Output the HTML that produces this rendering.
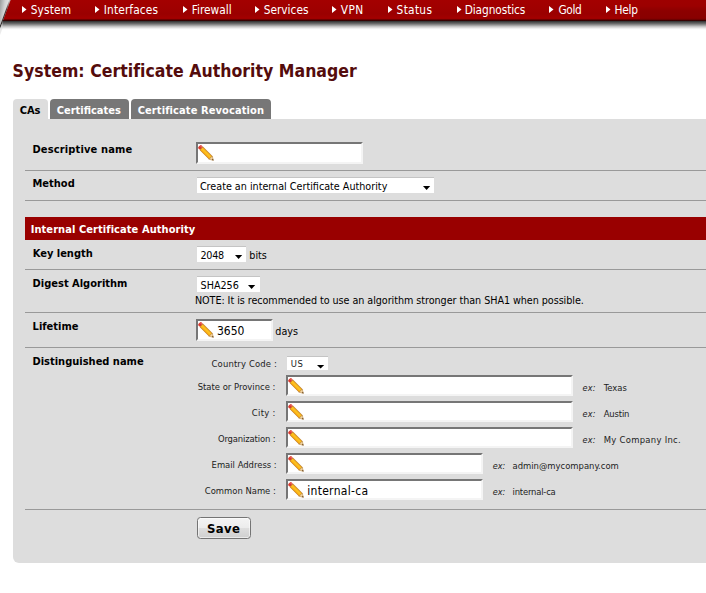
<!DOCTYPE html>
<html lang="en">
<head>
<meta charset="utf-8">
<title>System: Certificate Authority Manager</title>
<style>
html,body{margin:0;padding:0;background:#fff;}
body{width:706px;height:593px;position:relative;overflow:hidden;font-family:"DejaVu Sans Condensed","Liberation Sans",sans-serif;font-size:11px;color:#000;}
.t{position:absolute;white-space:nowrap;line-height:1.2;display:block;}
.a{position:absolute;display:block;}
#nav{left:0;top:0;width:706px;height:21px;background:linear-gradient(#9e0000 0,#9c0000 6px,#8c0000 11px,#890000 18px,#7a0000 19.3px,#3c0000 20.3px,#2a0505 21px);}
#nav2{left:0;top:0;width:640px;height:19.4px;background:linear-gradient(#a40000 0,#a00000 8px,#9a0000 14px,#a30000 18px,#980000 19.4px);}
#navshadow{left:0;top:21px;width:706px;height:9px;background:linear-gradient(#2c2c2c 0,#464646 1px,#686868 2.5px,#959595 4px,#c4c4c4 5.5px,#e6e6e6 7px,#f8f8f8 8px,#fff 9px);}
.tab{position:absolute;top:99px;height:20px;border-radius:4px 4px 0 0;}
.tab.on{background:#dddddd;}
.tab.off{background:#777777;}
#panel{left:13px;top:119px;width:693px;height:444px;background:#dddddd;border-radius:0 0 0 6px;}
.hr{position:absolute;left:25px;width:681px;height:1px;background:#999;}
.inp{position:absolute;background:#fff;border-style:solid;border-width:2px;border-color:#767676 #f4f4f4 #f4f4f4 #767676;box-sizing:border-box;}
.sel{position:absolute;background:#fff;box-sizing:border-box;border-top:1px solid #c4c4c4;}
#bar{left:25px;top:217px;width:681px;height:23px;background:#990000;}
#save{left:197px;top:517px;width:54px;height:22px;box-sizing:border-box;border:1px solid #747474;border-radius:3.5px;box-shadow:inset 0 0 0 1px rgba(255,255,255,.55);background:linear-gradient(#f4f4f4 0,#ececec 48%,#dedede 52%,#cfcfcf 100%);}
.pen{position:absolute;width:17px;height:17px;overflow:visible;}
</style>
</head>
<body>
<div class="a" id="nav"></div>
<div class="a" id="nav2"></div>
<div class="a" id="navshadow"></div>
<svg class="a" style="left:0;top:0" width="16" height="40" viewBox="0 0 16 40">
  <defs>
    <linearGradient id="g1" x1="0" y1="0" x2="1" y2="0.36"><stop offset="0" stop-color="#9a9c9c"/><stop offset="0.45" stop-color="#d2d3d3"/><stop offset="0.8" stop-color="#e6e6e6"/><stop offset="1" stop-color="#c8c8c8"/></linearGradient>
    <linearGradient id="g2" x1="0" y1="0" x2="0" y2="1"><stop offset="0" stop-color="#3a0a0a" stop-opacity="0.15"/><stop offset="0.35" stop-color="#2a0808" stop-opacity="0.8"/><stop offset="1" stop-color="#111" stop-opacity="1"/></linearGradient>
  </defs>
  <polygon points="0,0 10.6,0 0,28.5" fill="url(#g1)"/>
  <polygon points="10.6,0 9.2,0 0,26 0,28.5" fill="url(#g2)"/>
  <polygon points="0,28.5 2.6,22 2.6,28 0,35" fill="#d9d9d9" opacity="0.55"/>
</svg>
<svg class="a" style="left:21.7px;top:5.9px" width="5" height="7" viewBox="0 0 5 7"><polygon points="0,0 4.5,3.5 0,7" fill="#fff"/></svg>
<svg class="a" style="left:95.0px;top:5.9px" width="5" height="7" viewBox="0 0 5 7"><polygon points="0,0 4.5,3.5 0,7" fill="#fff"/></svg>
<svg class="a" style="left:182.8px;top:5.9px" width="5" height="7" viewBox="0 0 5 7"><polygon points="0,0 4.5,3.5 0,7" fill="#fff"/></svg>
<svg class="a" style="left:255.0px;top:5.9px" width="5" height="7" viewBox="0 0 5 7"><polygon points="0,0 4.5,3.5 0,7" fill="#fff"/></svg>
<svg class="a" style="left:332.0px;top:5.9px" width="5" height="7" viewBox="0 0 5 7"><polygon points="0,0 4.5,3.5 0,7" fill="#fff"/></svg>
<svg class="a" style="left:388.4px;top:5.9px" width="5" height="7" viewBox="0 0 5 7"><polygon points="0,0 4.5,3.5 0,7" fill="#fff"/></svg>
<svg class="a" style="left:456.5px;top:5.9px" width="5" height="7" viewBox="0 0 5 7"><polygon points="0,0 4.5,3.5 0,7" fill="#fff"/></svg>
<svg class="a" style="left:548.9px;top:5.9px" width="5" height="7" viewBox="0 0 5 7"><polygon points="0,0 4.5,3.5 0,7" fill="#fff"/></svg>
<svg class="a" style="left:606.3px;top:5.9px" width="5" height="7" viewBox="0 0 5 7"><polygon points="0,0 4.5,3.5 0,7" fill="#fff"/></svg>

<div class="tab on" style="left:13px;width:35px"></div>
<div class="tab off" style="left:50.2px;width:78.4px"></div>
<div class="tab off" style="left:130.7px;width:140.3px"></div>
<div class="a" id="panel"></div>

<div class="inp" style="left:196px;top:142px;width:167px;height:22px"></div>
<div class="hr" style="top:170px"></div>
<div class="sel" style="left:197px;top:177px;width:237px;height:16px"></div>
<div class="hr" style="top:200px"></div>
<div class="a" id="bar"></div>
<div class="sel" style="left:197px;top:246px;width:49px;height:16px"></div>
<div class="hr" style="top:269px"></div>
<div class="sel" style="left:197px;top:276px;width:63px;height:16px"></div>
<div class="hr" style="top:312px"></div>
<div class="inp" style="left:196px;top:319px;width:77px;height:22px"></div>
<div class="hr" style="top:347px"></div>
<div class="sel" style="left:287px;top:356px;width:41px;height:14px"></div>
<div class="inp" style="left:286px;top:375px;width:287px;height:21px"></div>
<div class="inp" style="left:286px;top:401px;width:287px;height:21px"></div>
<div class="inp" style="left:286px;top:427px;width:287px;height:21px"></div>
<div class="inp" style="left:286px;top:453px;width:197px;height:21px"></div>
<div class="inp" style="left:286px;top:479px;width:197px;height:21px"></div>
<div class="hr" style="top:509px"></div>
<div class="a" id="save"></div>

<svg class="a" style="left:423px;top:186px" width="8" height="5" viewBox="0 0 8 5"><polygon points="0,0 7.2,0 3.6,4.1" fill="#000"/></svg>
<svg class="a" style="left:235px;top:255px" width="8" height="5" viewBox="0 0 8 5"><polygon points="0,0 7.2,0 3.6,4.1" fill="#000"/></svg>
<svg class="a" style="left:248.4px;top:285px" width="8" height="5" viewBox="0 0 8 5"><polygon points="0,0 7.2,0 3.6,4.1" fill="#000"/></svg>
<svg class="a" style="left:317px;top:365.2px" width="8" height="5" viewBox="0 0 8 5"><polygon points="0,0 7.2,0 3.6,3.6" fill="#000"/></svg>
<svg width="0" height="0" style="position:absolute"><defs>
<g id="pencil">
  <g transform="translate(1.9,1.9) rotate(45)">
    <rect x="-1" y="-2.2" width="3.6" height="4.4" rx="1.3" fill="#dc3a30"/>
    <rect x="-0.6" y="-2" width="2.8" height="1.4" rx="0.7" fill="#ee7a70" opacity="0.7"/>
    <rect x="2.2" y="-2.2" width="13.1" height="4.4" fill="url(#pg)" stroke="#b97a22" stroke-width="0.6"/>
    <polygon points="15.3,-2.2 19,0 15.3,2.2" fill="#f3d5a2" stroke="#b07a30" stroke-width="0.5"/>
    <polygon points="17.7,-0.8 19.4,0 17.7,0.8" fill="#5a3a1a"/>
  </g>
</g>
<linearGradient id="pg" x1="0" y1="0" x2="0" y2="1"><stop offset="0" stop-color="#dd8f1c"/><stop offset="0.4" stop-color="#ffc722"/><stop offset="0.65" stop-color="#fbb818"/><stop offset="1" stop-color="#ef9410"/></linearGradient></defs></svg>
<svg class="pen" style="left:198px;top:145px" viewBox="0 0 17 17"><use href="#pencil"/></svg>
<svg class="pen" style="left:198px;top:322px" viewBox="0 0 17 17"><use href="#pencil"/></svg>
<svg class="pen" style="left:288px;top:378px" viewBox="0 0 17 17"><use href="#pencil"/></svg>
<svg class="pen" style="left:288px;top:404px" viewBox="0 0 17 17"><use href="#pencil"/></svg>
<svg class="pen" style="left:288px;top:430px" viewBox="0 0 17 17"><use href="#pencil"/></svg>
<svg class="pen" style="left:288px;top:456px" viewBox="0 0 17 17"><use href="#pencil"/></svg>
<svg class="pen" style="left:288px;top:482px" viewBox="0 0 17 17"><use href="#pencil"/></svg>
<span class="t" id="t0" style="left:30.70px;top:3.01px;font-size:11.8px;letter-spacing:0.144px;color:#fff;">System</span>
<span class="t" id="t1" style="left:103.80px;top:3.01px;font-size:11.8px;letter-spacing:0.133px;color:#fff;">Interfaces</span>
<span class="t" id="t2" style="left:191.70px;top:3.01px;font-size:11.8px;letter-spacing:0.000px;color:#fff;">Firewall</span>
<span class="t" id="t3" style="left:263.70px;top:3.01px;font-size:11.8px;letter-spacing:0.000px;color:#fff;">Services</span>
<span class="t" id="t4" style="left:340.80px;top:3.01px;font-size:11.8px;letter-spacing:0.360px;color:#fff;">VPN</span>
<span class="t" id="t5" style="left:396.60px;top:3.01px;font-size:11.8px;letter-spacing:0.304px;color:#fff;">Status</span>
<span class="t" id="t6" style="left:464.70px;top:3.01px;font-size:11.8px;letter-spacing:-0.096px;color:#fff;">Diagnostics</span>
<span class="t" id="t7" style="left:558.38px;top:3.01px;font-size:11.8px;letter-spacing:-0.347px;color:#fff;">Gold</span>
<span class="t" id="t8" style="left:614.50px;top:3.01px;font-size:11.8px;letter-spacing:-0.267px;color:#fff;">Help</span>
<span class="t" id="t9" style="left:12.60px;top:61.01px;font-size:17.5px;letter-spacing:0.022px;font-weight:bold;color:#540c0c;">System: Certificate Authority Manager</span>
<span class="t" id="t10" style="left:19.70px;top:104.01px;font-size:11px;letter-spacing:0.000px;font-weight:bold;">CAs</span>
<span class="t" id="t11" style="left:56.70px;top:104.01px;font-size:11px;letter-spacing:0.000px;font-weight:bold;color:#fff;">Certificates</span>
<span class="t" id="t12" style="left:137.70px;top:104.01px;font-size:11px;letter-spacing:0.103px;font-weight:bold;color:#fff;">Certificate Revocation</span>
<span class="t" id="t13" style="left:32.50px;top:143.01px;font-size:11px;letter-spacing:0.149px;font-weight:bold;">Descriptive name</span>
<span class="t" id="t14" style="left:32.50px;top:177.01px;font-size:11px;letter-spacing:0.000px;font-weight:bold;">Method</span>
<span class="t" id="t15" style="left:30.70px;top:223.01px;font-size:11px;letter-spacing:0.072px;font-weight:bold;color:#fff;">Internal Certificate Authority</span>
<span class="t" id="t16" style="left:32.70px;top:247.00px;font-size:11px;letter-spacing:0.000px;font-weight:bold;">Key length</span>
<span class="t" id="t17" style="left:32.60px;top:277.00px;font-size:11px;letter-spacing:0.000px;font-weight:bold;">Digest Algorithm</span>
<span class="t" id="t18" style="left:32.60px;top:320.01px;font-size:11px;letter-spacing:0.000px;font-weight:bold;">Lifetime</span>
<span class="t" id="t19" style="left:32.50px;top:355.00px;font-size:11px;letter-spacing:0.000px;font-weight:bold;">Distinguished name</span>
<span class="t" id="t20" style="left:199.90px;top:181.01px;font-size:10.7px;letter-spacing:0.000px;">Create an internal Certificate Authority</span>
<span class="t" id="t21" style="left:200.50px;top:250.01px;font-size:10.7px;letter-spacing:-0.267px;">2048</span>
<span class="t" id="t22" style="left:249.30px;top:250.01px;font-size:10.7px;letter-spacing:0.000px;">bits</span>
<span class="t" id="t23" style="left:200.56px;top:280.01px;font-size:10.7px;letter-spacing:0.000px;">SHA256</span>
<span class="t" id="t24" style="left:194.90px;top:295.01px;font-size:10.7px;letter-spacing:-0.044px;">NOTE: It is recommended to use an algorithm stronger than SHA1 when possible.</span>
<span class="t" id="t25" style="left:216.90px;top:324.00px;font-size:12px;letter-spacing:0.000px;">3650</span>
<span class="t" id="t26" style="left:275.30px;top:326.00px;font-size:10.7px;letter-spacing:0.000px;">days</span>
<span class="t" id="t27" style="left:211.56px;top:358.01px;font-size:9.4px;letter-spacing:0.148px;color:#1c1c1c;">Country Code :</span>
<span class="t" id="t28" style="left:290.80px;top:358.01px;font-size:9.4px;letter-spacing:0.600px;color:#1c1c1c;">US</span>
<span class="t" id="t29" style="left:197.70px;top:381.01px;font-size:9.4px;letter-spacing:0.000px;color:#1c1c1c;">State or Province :</span>
<span class="t" id="t30" style="left:251.80px;top:407.01px;font-size:9.4px;letter-spacing:0.320px;color:#1c1c1c;">City :</span>
<span class="t" id="t31" style="left:217.90px;top:433.01px;font-size:9.4px;letter-spacing:-0.129px;color:#1c1c1c;">Organization :</span>
<span class="t" id="t32" style="left:211.56px;top:459.00px;font-size:9.4px;letter-spacing:0.000px;color:#1c1c1c;">Email Address :</span>
<span class="t" id="t33" style="left:204.74px;top:485.00px;font-size:9.4px;letter-spacing:0.000px;color:#1c1c1c;">Common Name :</span>
<span class="t" id="t34" style="left:582.38px;top:383.00px;font-size:9px;letter-spacing:0.320px;color:#1c1c1c;font-style:italic;">ex:</span>
<span class="t" id="t35" style="left:582.38px;top:409.00px;font-size:9px;letter-spacing:0.320px;color:#1c1c1c;font-style:italic;">ex:</span>
<span class="t" id="t36" style="left:582.38px;top:435.00px;font-size:9px;letter-spacing:0.320px;color:#1c1c1c;font-style:italic;">ex:</span>
<span class="t" id="t37" style="left:492.74px;top:461.01px;font-size:9px;letter-spacing:0.000px;color:#1c1c1c;font-style:italic;">ex:</span>
<span class="t" id="t38" style="left:492.74px;top:487.00px;font-size:9px;letter-spacing:0.000px;color:#1c1c1c;font-style:italic;">ex:</span>
<span class="t" id="t39" style="left:603.74px;top:382.01px;font-size:9.4px;letter-spacing:0.000px;color:#1c1c1c;">Texas</span>
<span class="t" id="t40" style="left:603.74px;top:408.01px;font-size:9.4px;letter-spacing:-0.160px;color:#1c1c1c;">Austin</span>
<span class="t" id="t41" style="left:603.74px;top:434.01px;font-size:9.4px;letter-spacing:0.286px;color:#1c1c1c;">My Company Inc.</span>
<span class="t" id="t42" style="left:512.50px;top:460.00px;font-size:9.4px;letter-spacing:0.000px;color:#1c1c1c;">admin@mycompany.com</span>
<span class="t" id="t43" style="left:512.50px;top:486.01px;font-size:9.4px;letter-spacing:-0.192px;color:#1c1c1c;">internal-ca</span>
<span class="t" id="t44" style="left:307.20px;top:484.01px;font-size:12px;letter-spacing:0.304px;">internal-ca</span>
<span class="t" id="t45" style="left:207.10px;top:521.01px;font-size:13px;letter-spacing:0.320px;font-weight:bold;">Save</span>
</body>
</html>
